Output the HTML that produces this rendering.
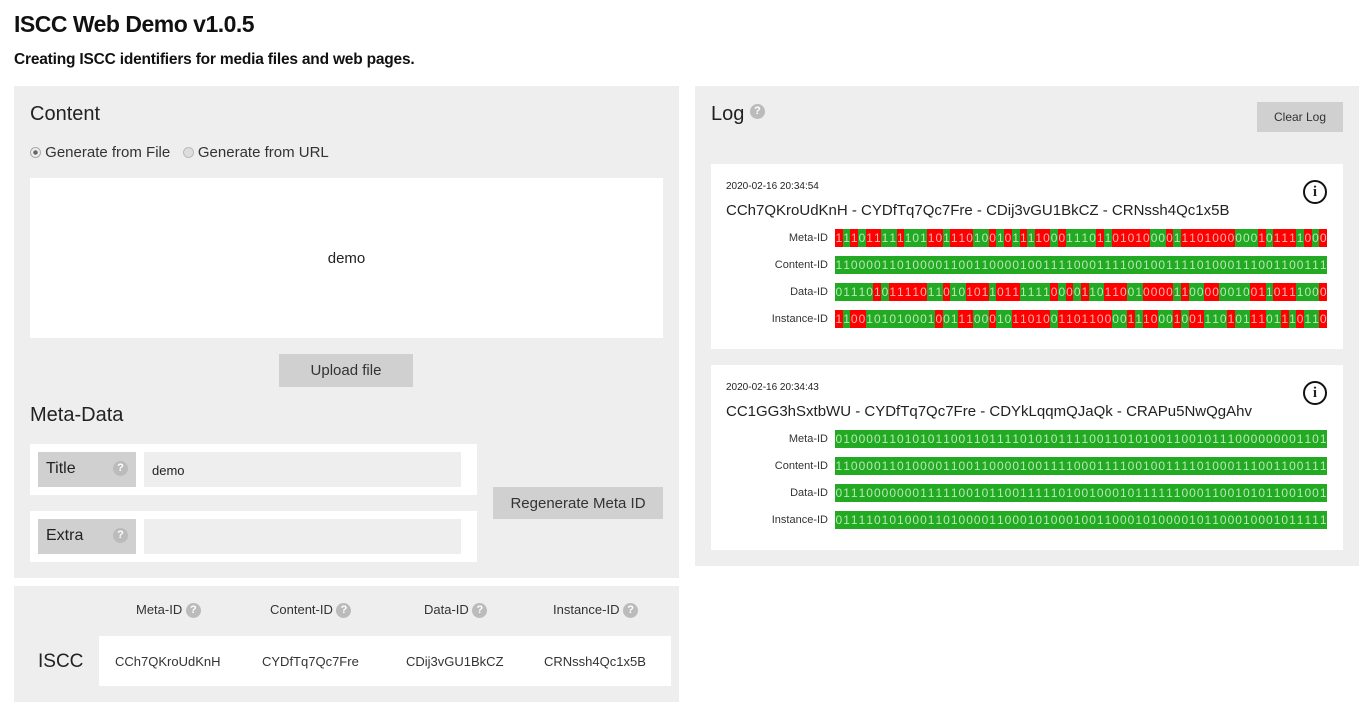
<!DOCTYPE html><html><head><meta charset="utf-8"><style>
*{box-sizing:border-box;margin:0;padding:0}
body{width:1372px;height:708px;background:#fff;font-family:"Liberation Sans",sans-serif;color:#222;position:relative;overflow:hidden}
.a{position:absolute}
.panel{background:#eeeeee}
.white{background:#fff}
.btn{background:#d0d0d0;display:flex;align-items:center;justify-content:center;color:#333}
.q{display:inline-block;width:15px;height:15px;border-radius:50%;background:#bbb;color:#fff;font-size:11px;font-weight:bold;text-align:center;line-height:15px;vertical-align:middle}
.lbl{font-size:11px;color:#333;text-align:right;width:110px}
.bits{display:flex;height:18px;width:492px}
.bits span{flex:1;font-size:12px;line-height:18px;text-align:center;color:#b8e8b8;background:#22aa22}
.bits span.r{background:#f00;color:#ffb0b0}
.info{width:24px;height:24px;border:2px solid #111;border-radius:50%;font:bold 15px "Liberation Serif",serif;text-align:center;line-height:20px}
</style></head><body>
<div class="a" style="left:14px;top:11px;font-size:23px;font-weight:bold;color:#111;letter-spacing:-0.5px">ISCC Web Demo v1.0.5</div>
<div class="a" style="left:14px;top:51px;font-size:15.5px;font-weight:bold;color:#111;letter-spacing:-0.2px">Creating ISCC identifiers for media files and web pages.</div>

<div class="a panel" style="left:14px;top:86px;width:665px;height:492px"></div>
<div class="a" style="left:30px;top:103px;font-size:20px">Content</div>
<div class="a" style="left:30px;top:144px;font-size:15px;color:#333"><span style="display:inline-block;width:11px;height:11px;border:1px solid #aaa;border-radius:50%;background:radial-gradient(#666 30%,#eee 40%);vertical-align:-1px"></span> Generate from File &nbsp; <span style="display:inline-block;width:11px;height:11px;border:1px solid #bbb;border-radius:50%;background:#ddd;vertical-align:-1px"></span> Generate from URL</div>
<div class="a white" style="left:30px;top:178px;width:633px;height:160px;display:flex;align-items:center;justify-content:center;font-size:15px">demo</div>
<div class="a btn" style="left:279px;top:354px;width:134px;height:33px;font-size:15px">Upload file</div>
<div class="a" style="left:30px;top:404px;font-size:20px">Meta-Data</div>
<div class="a white" style="left:30px;top:444px;width:447px;height:51px"></div>
<div class="a" style="left:38px;top:452px;width:98px;height:35px;background:#d0d0d0;font-size:16px;padding:8px"><span>Title</span><span class="q a" style="left:75px;top:9px">?</span></div>
<div class="a panel" style="left:144px;top:452px;width:317px;height:35px;font-size:13px;padding:11px 8px">demo</div>
<div class="a white" style="left:30px;top:511px;width:447px;height:51px"></div>
<div class="a" style="left:38px;top:519px;width:98px;height:35px;background:#d0d0d0;font-size:16px;padding:8px"><span>Extra</span><span class="q a" style="left:75px;top:9px">?</span></div>
<div class="a panel" style="left:144px;top:519px;width:317px;height:35px"></div>
<div class="a btn" style="left:493px;top:487px;width:170px;height:32px;font-size:15px">Regenerate Meta ID</div>

<div class="a panel" style="left:14px;top:586px;width:665px;height:116px"></div>
<div class="a" style="left:136px;top:602px;font-size:13px;color:#333">Meta-ID <span class="q">?</span></div>
<div class="a" style="left:270px;top:602px;font-size:13px;color:#333">Content-ID <span class="q">?</span></div>
<div class="a" style="left:424px;top:602px;font-size:13px;color:#333">Data-ID <span class="q">?</span></div>
<div class="a" style="left:553px;top:602px;font-size:13px;color:#333">Instance-ID <span class="q">?</span></div>
<div class="a" style="left:38px;top:651px;font-size:19px">ISCC</div>
<div class="a white" style="left:99px;top:636px;width:572px;height:50px;font-size:13px;color:#333">
<span class="a" style="left:16px;top:18px">CCh7QKroUdKnH</span><span class="a" style="left:163px;top:18px">CYDfTq7Qc7Fre</span><span class="a" style="left:307px;top:18px">CDij3vGU1BkCZ</span><span class="a" style="left:445px;top:18px">CRNssh4Qc1x5B</span></div>

<div class="a panel" style="left:695px;top:86px;width:664px;height:480px"></div>
<div class="a" style="left:711px;top:103px;font-size:20px">Log <span class="q" style="vertical-align:6px">?</span></div>
<div class="a btn" style="left:1257px;top:102px;width:86px;height:30px;font-size:12px">Clear Log</div>

<div id="e1" class="a white" style="left:711px;top:164px;width:632px;height:185px"></div>
<div id="e2" class="a white" style="left:711px;top:365px;width:632px;height:185px"></div>
<script>
var A={M:"1110111111011011101001011110001110110101000011101000000101111000",C:"1100001101000011001100001001111000111100100111101000111001100111",D:"0111010111101101010110111111000011011001000011000000100110111000",I:"1100101010001001110001011010011011000011100010011101011101110110"};
var B={M:"0100001101010110011011110101011110011010100110010111000000001101",C:"1100001101000011001100001001111000111100100111101000111001100111",D:"0111000000011111001011001111101001000101111110001100101011001001",I:"0111101010001101000011000101000100110001010000101100010001011111"};
function fill(id,ts,title,S,O,red){var e=document.getElementById(id);var h='<div class="a" style="left:15px;top:17px;font-size:10px">'+ts+'</div><div class="a" style="left:15px;top:38px;font-size:15px">'+title+'</div><div class="a info" style="left:592px;top:16px">i</div>';
var L=[["Meta-ID","M"],["Content-ID","C"],["Data-ID","D"],["Instance-ID","I"]];
L.forEach(function(l,k){var s=S[l[1]],o=O[l[1]],b='';for(var i=0;i<64;i++){b+='<span'+(red&&s[i]!=o[i]?' class="r"':'')+'>'+s[i]+'</span>';}
h+='<div class="a lbl" style="left:7px;top:'+(68+27*k)+'px">'+l[0]+'</div><div class="a bits" style="left:124px;top:'+(65+27*k)+'px">'+b+'</div>';});
e.innerHTML=h;}
fill("e1","2020-02-16 20:34:54","CCh7QKroUdKnH - CYDfTq7Qc7Fre - CDij3vGU1BkCZ - CRNssh4Qc1x5B",A,B,true);
fill("e2","2020-02-16 20:34:43","CC1GG3hSxtbWU - CYDfTq7Qc7Fre - CDYkLqqmQJaQk - CRAPu5NwQgAhv",B,A,false);
</script>
</body></html>
